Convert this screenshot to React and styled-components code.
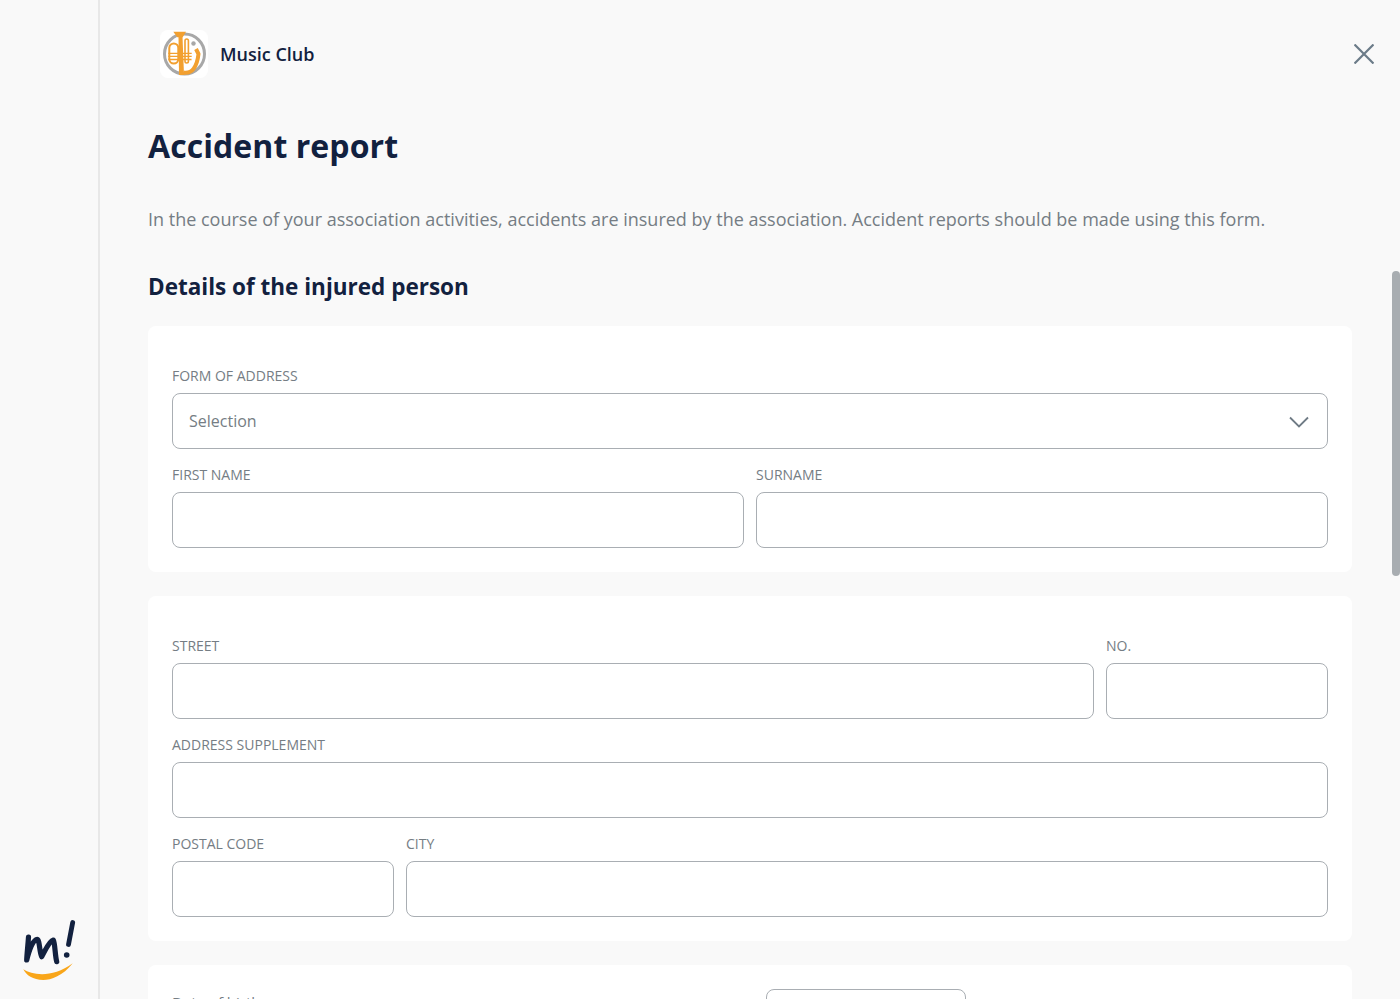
import React from 'react';
import styled, { createGlobalStyle } from 'styled-components';

const Global = createGlobalStyle`
    * { box-sizing: border-box; }
    html, body { margin: 0; height: 100%; overflow: hidden; }
    body { background: #f9f9f9; font-family: "Open Sans", "Noto Sans", sans-serif; color: #12213f; }
`;

const ClubLogo = () => (
    <svg width="48" height="48" viewBox="0 0 48 48">
        <rect width="48" height="48" rx="8" fill="#fff" />
        <circle cx="24.500" cy="24" r="20" fill="none" stroke="#a8a8a8" strokeWidth="3" />
        <path d="M13.300 1.700H26L22.700 7.300H17.300z" fill="#f2a030" />
        <path d="M18.500 7h4l1.500 38h-5z" fill="#f2a030" />
        <rect x="9.300" y="13.500" width="9" height="20" rx="4.500" fill="none" stroke="#f2a030" strokeWidth="2" />
        <rect x="25" y="9" width="3.400" height="24" rx="1.700" fill="none" stroke="#f2a030" strokeWidth="1.600" />
        <path d="M8.300 23.300H31.700M8.300 26.300H31.700M8.300 29.500H31.700" stroke="#f2a030" strokeWidth="1.300" />
        <path d="M23.500 42.500C32 44 37 37 38.500 24L36 19" fill="none" stroke="#f2a030" strokeWidth="4" strokeLinejoin="round" />
        <path d="M32.500 24h3M31.500 29h3M30 34h3" stroke="#fff" strokeWidth="1" />
        <circle cx="33.500" cy="13.500" r="2.200" fill="#a8a8a8" />
    </svg>
);

const BrandMark = () => (
    <svg width="56" height="64" viewBox="0 0 56 64">
        <path d="M7.500 18C7 26 6 34 5.700 41 8 32 11 22 15.700 20.500 19 20 18 32 20.700 37.700 24 32 28 22 32.300 21 34 24 34 36 35.700 42.700" fill="none" stroke="#12213f" strokeWidth="5.200" strokeLinecap="round" strokeLinejoin="round" />
        <path d="M51.700 3.500L47.500 25.500" stroke="#12213f" strokeWidth="4.800" strokeLinecap="round" />
        <circle cx="45.700" cy="36" r="2.800" fill="#12213f" />
        <path d="M2.300 50.300C12 56.500 32 59 51.700 44.300 42 57 30 61 22.300 61 12 61 5 56 2.300 50.300z" fill="#f9a61a" />
    </svg>
);

const Chevron = () => (
    <svg width="20" height="12" viewBox="0 0 20 12">
        <path d="M1 1.500l9 9 9-9" fill="none" stroke="#6f7b85" strokeWidth="1.800" />
    </svg>
);

const CloseIcon = () => (
    <svg width="20" height="20" viewBox="0 0 20 20">
        <path d="M.5.500l19 19M19.500.500l-19 19" fill="none" stroke="#6b7b88" strokeWidth="2.200" />
    </svg>
);

const App = () => {
    return (
        <Page>
            <Global />
            <Sidebar>
                <BrandMark />
            </Sidebar>
            <Main>
                <Header>
                    <Club>
                        <ClubLogo />
                        <ClubName>Music Club</ClubName>
                    </Club>
                    <CloseBtn aria-label="close">
                        <CloseIcon />
                    </CloseBtn>
                </Header>
                <Title>Accident report</Title>
                <Intro>
                    In the course of your association activities, accidents are insured by the association. Accident reports should be made using this form.
                </Intro>
                <SectionTitle>Details of the injured person</SectionTitle>

                <Card>
                    <Row>
                        <Field>
                            <Label>FORM OF ADDRESS</Label>
                            <SelectBox>
                                Selection
                                <SelectIcon>
                                    <Chevron />
                                </SelectIcon>
                            </SelectBox>
                        </Field>
                    </Row>
                    <Row>
                        <Field>
                            <Label>FIRST NAME</Label>
                            <Input />
                        </Field>
                        <Field>
                            <Label>SURNAME</Label>
                            <Input />
                        </Field>
                    </Row>
                </Card>

                <Card>
                    <Row>
                        <Field>
                            <Label>STREET</Label>
                            <Input />
                        </Field>
                        <Field $width="222px">
                            <Label>NO.</Label>
                            <Input />
                        </Field>
                    </Row>
                    <Row>
                        <Field>
                            <Label>ADDRESS SUPPLEMENT</Label>
                            <Input />
                        </Field>
                    </Row>
                    <Row>
                        <Field $width="222px">
                            <Label>POSTAL CODE</Label>
                            <Input />
                        </Field>
                        <Field>
                            <Label>CITY</Label>
                            <Input />
                        </Field>
                    </Row>
                </Card>

                <Card>
                    <DateRow>
                        <DateLabel>Date of birth</DateLabel>
                        <DateInput />
                    </DateRow>
                </Card>
            </Main>
            <ScrollThumb />
        </Page>
    );
};

const Page = styled.div`
    display: flex;
    height: 999px;
    overflow: hidden;
    position: relative;
`;

const Sidebar = styled.aside`
    width: 100px;
    flex: none;
    border-right: 2px solid #e8e8e8;
    display: flex;
    align-items: flex-end;
    padding: 0 0 16px 21px;
`;

const Main = styled.main`
    width: 1226px;
    flex: none;
    margin-left: 48px;
`;

const Header = styled.header`
    display: flex;
    align-items: center;
    justify-content: space-between;
    height: 48px;
    margin-top: 30px;
`;

const Club = styled.div`
    display: flex;
    align-items: center;
    gap: 12px;
    padding-left: 12px;
`;

const ClubName = styled.span`
    font-size: 18px;
    font-weight: 600;
    color: #12213f;
`;

const CloseBtn = styled.button`
    border: 0;
    background: none;
    padding: 0;
    display: flex;
    margin-top: -1px;
`;

const Title = styled.h1`
    margin: 46px 0 0;
    font-size: 32px;
    line-height: 44px;
    font-weight: 700;
    letter-spacing: 0.07px;
    color: #12213f;
`;

const Intro = styled.p`
    margin: 38px 0 0;
    width: 1204px;
    font-size: 18px;
    line-height: 26px;
    color: #757d84;
`;

const SectionTitle = styled.h2`
    margin: 39px 0 -1px;
    font-size: 22.500px;
    line-height: 32px;
    font-weight: 700;
    color: #12213f;
`;

const Card = styled.section`
    width: 1204px;
    background: #fff;
    border-radius: 8px;
    padding: 24px;
    margin: 24px 0 0;
`;

const Row = styled.div`
    display: flex;
    gap: 12px;
`;

const Field = styled.div`
    display: flex;
    flex-direction: column;
    ${(p) => (p.$width ? `width: ${p.$width}; flex: none;` : 'flex: 1; min-width: 0;')}
`;

const Label = styled.label`
    height: 43px;
    padding-top: 16px;
    font-size: 14px;
    line-height: 19px;
    color: #757d84;
`;

const Input = styled.input`
    width: 100%;
    height: 56px;
    border: 1px solid #a9aeb3;
    border-radius: 8px;
    background: #fff;
    outline: none;
`;

const SelectBox = styled.div`
    height: 56px;
    border: 1px solid #a9aeb3;
    border-radius: 8px;
    background: #fff;
    padding: 0 18px 0 16px;
    display: flex;
    align-items: center;
    justify-content: space-between;
    font-size: 16px;
    color: #757d84;
`;

const SelectIcon = styled.span`
    display: flex;
    margin-top: 2px;
`;

const DateRow = styled.div`
    display: flex;
    align-items: flex-start;
`;

const DateLabel = styled.span`
    width: 594px;
    font-size: 15px;
    line-height: 22px;
    margin-top: 2px;
    color: #757d84;
`;

const DateInput = styled.div`
    width: 200px;
    height: 56px;
    border: 1px solid #a9aeb3;
    border-radius: 8px;
`;

const ScrollThumb = styled.div`
    position: absolute;
    right: 0;
    top: 271px;
    width: 8px;
    height: 305px;
    border-radius: 4px;
    background: #a8adb1;
`;

export default App;
